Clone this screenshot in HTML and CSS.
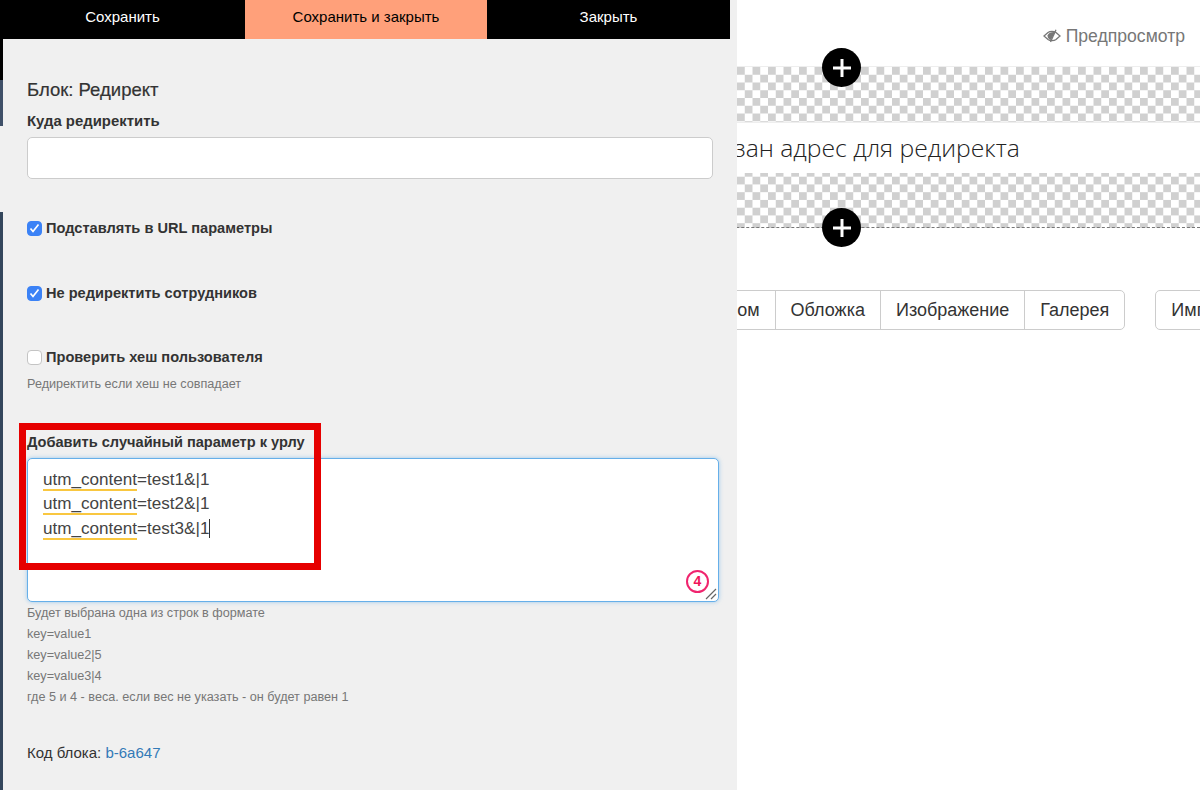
FILE: index.html
```html
<!DOCTYPE html>
<html lang="ru">
<head>
<meta charset="utf-8">
<title>Блок: Редирект</title>
<link rel="stylesheet" href="styles.css">
</head>
<body>
<main class="canvas">
  <div class="preview-row">
    <a class="preview">
      <svg class="eye" width="18" height="14" viewBox="0 0 18 14"><path d="M1 7 5 3.500C7 2 11 2 13 3.500L17 7 13 10.500C11 12 7 12 5 10.500Z" fill="none" stroke="#777" stroke-width="1.300"/><path d="M4.500 6.500C5.500 4 8.500 2.800 12 3.200L8 11C6 10.500 4.500 9 4.500 6.500Z" fill="#777"/><path d="M13 .8 7.500 13" stroke="#777" stroke-width="1.300"/></svg>
      <span>Предпросмотр</span>
    </a>
  </div>
  <div class="checker checker-first"></div>
  <div class="message">Не указан адрес для редиректа</div>
  <div class="checker checker-last"></div>
  <div class="toolbar">
    <div class="btn-group">
      <a class="btn">Текст</a>
      <a class="btn">Заголовок</a>
      <a class="btn">Кнопка</a>
      <a class="btn">С фоном</a>
      <a class="btn">Обложка</a>
      <a class="btn">Изображение</a>
      <a class="btn">Галерея</a>
    </div>
    <a class="btn btn-solo">Импорт</a>
  </div>
  <button class="add add-top"><svg width="20" height="20" viewBox="0 0 20 20"><path d="M10 1v18M1 10h18" stroke="#fff" stroke-width="3"/></svg></button>
  <button class="add add-bottom"><svg width="20" height="20" viewBox="0 0 20 20"><path d="M10 1v18M1 10h18" stroke="#fff" stroke-width="3"/></svg></button>
</main>

<div class="edge"></div>

<aside class="panel">
  <div class="actions">
    <a class="action">Сохранить</a>
    <a class="action action-primary">Сохранить и закрыть</a>
    <a class="action">Закрыть</a>
  </div>
  <div class="panel-body">
    <h1 class="title">Блок: Редирект</h1>
    <label class="label label-target">Куда редиректить</label>
    <div class="input"></div>

    <div class="check check-first"><span class="box box-on"><svg width="11" height="10" viewBox="0 0 11 10"><path d="M1.500 5.500 4 8.500 9.500 1.500" fill="none" stroke="#fff" stroke-width="1.700"/></svg></span><span>Подставлять в URL параметры</span></div>
    <div class="check check-second"><span class="box box-on"><svg width="11" height="10" viewBox="0 0 11 10"><path d="M1.500 5.500 4 8.500 9.500 1.500" fill="none" stroke="#fff" stroke-width="1.700"/></svg></span><span>Не редиректить сотрудников</span></div>
    <div class="check check-third"><span class="box"></span><span>Проверить хеш пользователя</span></div>
    <p class="hint hint-hash">Редиректить если хеш не совпадает</p>

    <label class="label label-random">Добавить случайный параметр к урлу</label>
    <div class="textarea">
      <div class="line"><span class="spell">utm_content</span>=test1&amp;|1</div>
      <div class="line"><span class="spell">utm_content</span>=test2&amp;|1</div>
      <div class="line"><span class="spell">utm_content</span>=test3&amp;|1<span class="caret"></span></div>
      <span class="badge">4</span>
      <svg class="grip" width="12" height="12" viewBox="0 0 12 12"><path d="M11 1 1 11M11 6 6 11" stroke="#666" stroke-width="1.200"/></svg>
    </div>
    <div class="hint hint-list">
      <div>Будет выбрана одна из строк в формате</div>
      <div>key=value1</div>
      <div>key=value2|5</div>
      <div>key=value3|4</div>
      <div>где 5 и 4 - веса. если вес не указать - он будет равен 1</div>
    </div>
    <p class="code">Код блока: <a class="link">b-6a647</a></p>
  </div>
  <div class="highlight"></div>
</aside>
</body>
</html>
```
FILE: styles.css
```css
* { box-sizing: border-box; }
html, body { margin: 0; height: 790px; overflow: hidden; background: #fff; }
body { position: relative; font-family: "Liberation Sans", Arial, sans-serif; color: #333; }

/* canvas behind the panel */
.canvas { position: relative; width: 1200px; height: 790px; overflow: hidden; }
.preview-row { height: 67px; padding: 26px 15px 0 0; display: flex; justify-content: flex-end; }
.preview { display: flex; align-items: center; gap: 5px; height: 20px; font-size: 17.6px; color: #777; }
.checker {
  height: 55px;
  background-color: #fff;
  background-image: repeating-conic-gradient(#d0d0d0 0 25%, #fff 0 50%);
  background-size: 15.5px 15.5px;
}
.checker-first { background-position: 0.75px 0; box-shadow: 0 0 0 1px #eee; }
.checker-last { background-position: 0.75px 3.7px; border-bottom: 1px dashed #777; }
.message {
  height: 51px;
  font-family: "Open Sans", sans-serif;
  font-weight: 300;
  font-size: 24.7px;
  line-height: 51px;
  color: #222;
  padding-left: 661px;
  white-space: nowrap;
}
.toolbar { display: flex; gap: 30px; margin-top: 62px; padding-left: 387px; white-space: nowrap; }
.btn-group { display: flex; border: 1px solid #ccc; border-radius: 5px; height: 40px; }
.btn { display: flex; align-items: center; padding: 0 15px; font-size: 18px; color: #333; border-left: 1px solid #ccc; height: 38px; }
.btn-group .btn:first-child { border-left: 0; }
.btn-solo { border: 1px solid #ccc; border-radius: 5px; height: 40px; }
.add {
  position: absolute; left: 822px; width: 39px; height: 39px; border: 0; padding: 0;
  border-radius: 50%; background: #000; display: flex; align-items: center; justify-content: center;
}
.add-top { top: 48px; }
.add-bottom { top: 208px; }

/* dark strip at the panel's left edge */
.edge {
  position: absolute; left: 0; top: 0; width: 3px; height: 790px;
  background: linear-gradient(#000 0 80px, #3f5068 80px 126px, #f0f0f0 126px 212px, #34465c 212px);
}

/* settings panel */
.panel { position: absolute; left: 3px; top: 0; width: 734px; height: 790px; background: #f0f0f0; }
.actions { display: grid; grid-template-columns: 245px 242px 243px; width: 730px; height: 39px; margin-left: -3px; background: #000; font-size: 15px; }
.action { display: flex; align-items: center; justify-content: center; padding-bottom: 7px; color: #fff; }
.action-primary { background: #ffa07a; color: #000; }
.panel-body { padding: 40px 0 0 24px; }
.title { margin: 0; font-size: 18.5px; font-weight: 400; line-height: 22px; color: #333; -webkit-text-stroke: 0.2px #333; }
.label { display: block; font-weight: 700; line-height: 20px; color: #333; }
.label-target { margin-top: 10px; font-size: 14.9px; }
.input { width: 686px; height: 42px; margin-top: 6px; background: #fff; border: 1px solid #ccc; border-radius: 5px; }
.check { display: flex; align-items: center; gap: 4px; font-size: 14.6px; font-weight: 700; line-height: 20px; color: #333; }
.check-first { margin-top: 39px; }
.check-second { margin-top: 45px; }
.check-third { margin-top: 44px; }
.box { flex: none; width: 15px; height: 15px; border-radius: 4px; background: #fff; border: 1px solid #c4c4c4; display: flex; align-items: center; justify-content: center; }
.box-on { background: #3b82f6; border-color: #3b82f6; }
.hint { margin: 0; font-size: 12.65px; line-height: 21px; color: #777; }
.hint-hash { margin-top: 7px; }
.label-random { margin-top: 37px; font-size: 14.6px; }
.textarea { position: relative; width: 692px; height: 144px; margin-top: 6px; padding: 8.5px 15px; background: #fff; border: 1px solid #66afe9; border-radius: 5px; box-shadow: 0 0 4px rgba(102,175,233,.6); font-size: 17.1px; line-height: 24.5px; color: #444; }
.spell { border-bottom: 2px solid #f9c740; }
.caret { display: inline-block; width: 1px; height: 19px; background: #333; vertical-align: text-bottom; }
.badge { position: absolute; right: 9px; bottom: 8px; width: 23px; height: 23px; border: 2.5px solid #f0246e; border-radius: 50%; color: #f0145a; font-size: 14px; font-weight: 700; display: flex; align-items: center; justify-content: center; }
.grip { position: absolute; right: 1px; bottom: 1px; }
.hint-list { margin-top: 1px; }
.code { margin: 35px 0 0; font-size: 15px; line-height: 20px; color: #333; }
.link { color: #337ab7; }
.highlight { position: absolute; left: 16px; top: 423px; width: 302px; height: 147px; border: 7px solid #e60000; }
```
